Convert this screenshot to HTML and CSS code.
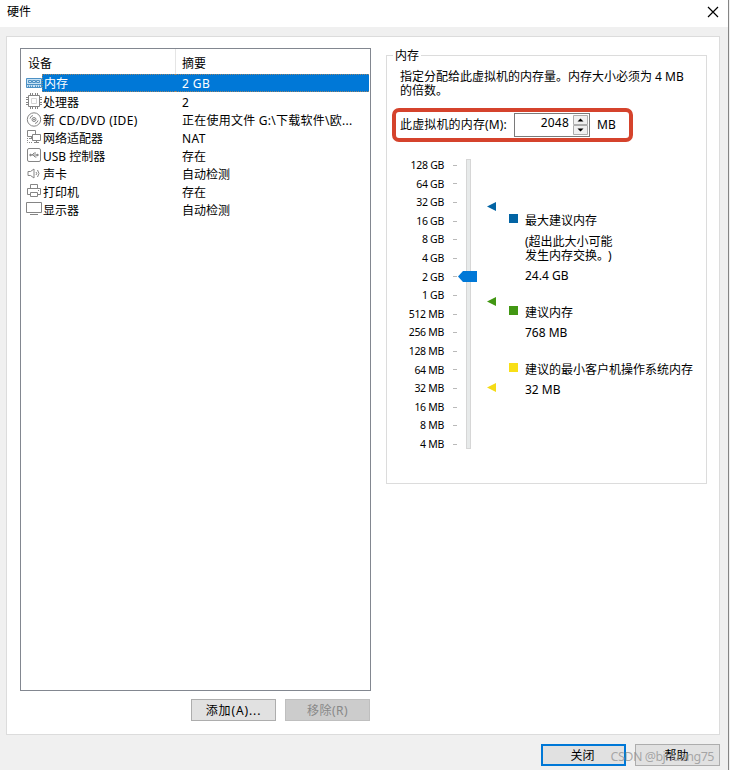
FILE: index.html
```html
<!DOCTYPE html>
<html lang="zh-CN">
<head>
<meta charset="utf-8">
<title>硬件</title>
<link rel="stylesheet" href="styles.css">
</head>
<body>
<div class="window">
  <header class="titlebar">
    <span>硬件</span>
    <svg class="close" width="12" height="12" viewBox="0 0 12 12"><path d="M1 1l10 10M11 1L1 11"/></svg>
  </header>
  <main class="panel">
    <section class="left">
      <div class="list">
        <div class="row head"><span class="dev">设备</span><span class="sum">摘要</span></div>
        <div class="row selected">
          <svg class="icon memory" viewBox="0 0 16 18"><path class="fill" d="M.5 4.500h15v9H.5z"/><path d="M2.500 6.500h3v2h-3zM6.500 6.500h3v2h-3zM10.500 6.500h3v2h-3zM1 10.500h14M2.500 13.500v-2m2 2v-2m2 2v-2m3 2v-2m2 2v-2m2 2v-2"/></svg>
          <span class="dev">内存</span><span class="sum wide">2 GB</span></div>
        <div class="row">
          <svg class="icon" viewBox="0 0 16 18"><path d="M2.500 3.500h11v11h-11z"/><path class="inner" d="M5.500 6.500h5v5h-5z"/><path d="M4.500 1v3m2-3v3m3-3v3m2-3v3m-7 10v3m2-3v3m3-3v3m2-3v3M0 5.500h3m-3 2h3m-3 3h3m-3 2h3m10-7h3m-3 2h3m-3 3h3m-3 2h3"/></svg>
          <span class="dev">处理器</span><span class="sum">2</span></div>
        <div class="row">
          <svg class="icon low" viewBox="0 0 16 18"><circle cx="8" cy="8.500" r="6.700"/><circle cx="8" cy="8.500" r="2"/><circle class="dot" cx="8" cy="8.500" r=".6"/><path d="M4 7.500a4 4 0 0 1 3-3m5 5a4 4 0 0 1-3 3"/></svg>
          <span class="dev tight">新 CD/DVD (IDE)</span><span class="sum latin">正在使用文件 G:\下载软件\欧...</span></div>
        <div class="row">
          <svg class="icon low" viewBox="0 0 16 18"><path d="M1.500 1.500h8v6h-8zM3 9.500h3M5.500 7.500v2"/><path class="mask" d="M6.500 5.500h8v6h-8z"/><path d="M8 13.500h5M10.500 11.500v2"/><path stroke-dasharray="1 1" d="M1.500 9v4.500h5"/></svg>
          <span class="dev">网络适配器</span><span class="sum wide">NAT</span></div>
        <div class="row">
          <svg class="icon low" viewBox="0 0 16 18"><rect x="1.500" y="1.500" width="13" height="13" rx="1.500"/><path d="M4 8h8M6 8l2-2h2M7 8l2 2h1.500"/><circle class="dot" cx="4.500" cy="8" r=".8"/><path class="dot" d="M11 7l1.500 1-1.500 1z"/></svg>
          <span class="dev">USB 控制器</span><span class="sum">存在</span></div>
        <div class="row">
          <svg class="icon low" viewBox="0 0 16 18"><path d="M2 6.500h2.500L8 4v9l-3.500-2.500H2zM10 7q1.500 1.500 0 3M11.500 5q3 3.500 0 7"/></svg>
          <span class="dev">声卡</span><span class="sum">自动检测</span></div>
        <div class="row">
          <svg class="icon low" viewBox="0 0 16 18"><path d="M4.500 6V1.500h7V6M4 11.500H1.500v-6h13v6H12M4.500 9.500h7v4h-7zM12 7.500h1"/></svg>
          <span class="dev">打印机</span><span class="sum">存在</span></div>
        <div class="row">
          <svg class="icon low" viewBox="0 0 16 18"><path d="M.5 1.500h15v10H.5zM4 13.500h8"/></svg>
          <span class="dev">显示器</span><span class="sum">自动检测</span></div>
      </div>
      <div class="actions"><button class="add">添加(A)...</button><button class="disabled" disabled>移除(R)</button></div>
    </section>
    <fieldset class="group">
      <legend>内存</legend>
      <p class="intro">指定分配给此虚拟机的内存量。内存大小必须为 4 MB<br>的倍数。</p>
      <div class="amount">
        <span class="label">此虚拟机的内存(M):</span>
        <div class="spin"><span>2048</span>
          <svg width="15" height="20" viewBox="0 0 15 20"><path class="btn" d="M.5.500h14v9H.5zM.5 10.500h14v9H.5z"/><path d="M4.500 6.500h6l-3-3zM4.500 13.500h6l-3 3z"/></svg>
        </div>
        <span>MB</span>
      </div>
      <div class="chart">
        <div class="scale">
          <span>128 GB</span><span>64 GB</span><span>32 GB</span><span>16 GB</span><span>8 GB</span><span>4 GB</span><span>2 GB</span><span>1 GB</span><span>512 MB</span><span>256 MB</span><span>128 MB</span><span>64 MB</span><span>32 MB</span><span>16 MB</span><span>8 MB</span><span>4 MB</span>
        </div>
        <div class="track"><svg class="thumb" width="19" height="11" viewBox="0 0 19 11"><path d="M0 5.500L5 0h14v11H5z"/></svg></div>
        <svg class="marks" width="10" height="200" viewBox="0 0 10 200"><path class="blue" d="M0 5.500L9 1v9z"/><path class="green" d="M0 100.500L9 96v9z"/><path class="yellow" d="M0 186.500L9 182v9z"/></svg>
        <div class="legend">
          <div class="item max"><i class="blue"></i><div><p>最大建议内存</p><p class="note">(超出此大小可能<br>发生内存交换。<span class="paren">)</span></p><p>24.4 GB</p></div></div>
          <div class="item rec"><i class="green"></i><div><p>建议内存</p><p>768 MB</p></div></div>
          <div class="item min"><i class="yellow"></i><div><p>建议的最小客户机操作系统内存</p><p>32 MB</p></div></div>
        </div>
      </div>
    </fieldset>
  </main>
  <footer class="footer"><button class="default">关闭</button><button class="help">帮助</button><span class="watermark">CSDN @bjhuang75</span></footer>
</div>
</body>
</html>
```
FILE: styles.css
```css
* { box-sizing: border-box; }
body { margin: 0; background: #f0f0f0; color: #000; font: 12px/18px "Noto Sans", "Noto Sans CJK SC", sans-serif; }
p { margin: 0; }
.window { width: 729px; height: 770px; overflow: hidden; border-right: 1px solid #858585; display: flex; flex-direction: column; }
.titlebar { height: 27px; flex: none; background: #fff; padding: 0 9px 4px 7px; display: flex; align-items: center; justify-content: space-between; }
.close { fill: none; stroke: #000; stroke-width: 1.2; }
.panel { margin: 9px 8px 0 6px; height: 699px; flex: none; background: #fff; border: 1px solid #dcdcdc; display: flex; padding: 11px 12px 0 13px; gap: 15px; }
.left { width: 351px; flex: none; }
.list { height: 643px; border: 1px solid #828790; }
.row { display: flex; height: 18px; padding-left: 5px; line-height: 21px; white-space: nowrap; }
.row .dev { width: 133px; padding-left: 1px; }
.row .sum { width: 194px; padding-left: 7px; }
.row .latin { letter-spacing: .25px; }
.row .tight { letter-spacing: .3px; }
.row .wide { letter-spacing: .4px; }
.head { height: 25px; line-height: 29px; padding-left: 0; }
.head .dev { width: 155px; padding-left: 7px; border-right: 1px solid #e5e5e5; }
.head .sum { padding-left: 6px; }
.selected .dev, .selected .sum { background: #0078d7; color: #fff; border: 1px dotted #96846b; border-width: 1px 0; line-height: 18px; }
.selected .dev { border-left-width: 1px; padding-left: 1px; }
.icon { width: 16px; height: 18px; flex: none; fill: none; stroke: #858585; stroke-width: 1; }
.icon.low { margin-top: 1px; }
.icon .dot { fill: #858585; }
.icon .mask { fill: #fff; }
.icon .inner { stroke: #d5d5d5; }
.memory { stroke: #4d91c4; }
.memory .fill { fill: #c9e2f4; }
.actions { display: flex; justify-content: flex-end; gap: 9px; padding: 8px 1px 0 0; }
button { width: 85px; height: 22px; padding: 0; border: 1px solid #adadad; background: #e1e1e1; color: #000; font: inherit; line-height: 22px; }
.add { letter-spacing: .9px; }
button.disabled { background: #ccc; border-color: #bfbfbf; color: #888; letter-spacing: .5px; }
.group { width: 321px; height: 438px; margin: -2px 0 0; padding: 0 0 0 13px; border: 1px solid #dcdcdc; min-width: 0; }
.group legend { margin-left: -7px; padding: 2px 2px 0; line-height: 16px; }
.intro { line-height: 14px; padding-top: 6px; white-space: nowrap; }
.amount { width: 241px; height: 34px; margin: 10px 0 0 -8px; border: 4px solid #d5432c; border-radius: 7px; display: flex; align-items: center; padding-left: 4px; white-space: nowrap; }
.amount .label { width: 114px; line-height: 26px; letter-spacing: .15px; }
.spin { width: 76px; height: 24px; margin-right: 7px; border: 1px solid #7a7a7a; display: flex; justify-content: flex-end; gap: 4px; padding: 1px 1px 0 0; line-height: 16px; letter-spacing: .2px; }
.spin svg { stroke: none; fill: #000; }
.spin .btn { fill: #f0f0f0; stroke: #adadad; }
.chart { display: flex; margin-top: 14px; }
.scale { width: 57px; display: flex; flex-direction: column; font-size: 10.500px; letter-spacing: -.3px; }
.scale span { height: 18.600px; line-height: 18.600px; width: 57px; display: flex; justify-content: flex-end; align-items: center; gap: 9px; }
.scale span::after { content: ""; width: 4px; height: 1px; background: #b9b9b9; }
.track { position: relative; width: 5px; height: 290px; margin: 3px 0 0 9px; background: #e7eaea; border: 1px solid #d6d6d6; }
.thumb { position: absolute; left: -9px; top: 111px; fill: #0078d7; }
.marks { margin: 45px 0 0 16px; flex: none; }
.blue { fill: #0264a4; background: #0264a4; }
.green { fill: #429713; background: #429713; }
.yellow { fill: #f5db16; background: #f8df17; }
.legend { padding: 56px 0 0 12px; white-space: nowrap; }
.item { display: flex; gap: 7px; }
.item i { width: 9px; height: 9px; flex: none; margin-top: 2px; }
.item p + p { margin-top: 2px; }
.item .note { line-height: 14px; }
.item p + .note { margin-top: 5px; }
.paren { padding-left: 5px; }
.max .note + p { margin-top: 4px; }
.rec { margin-top: 19px; }
.min { margin-top: 19px; }
.footer { position: relative; display: flex; gap: 9px; justify-content: flex-end; padding: 9px 8px 0; }
.footer button { line-height: 22px; }
.footer .default { border: 2px solid #0078d7; padding-right: 2px; line-height: 20px; }
.help { padding-right: 2px; }
.watermark { position: absolute; right: 14px; top: 13px; font-size: 12.500px; line-height: 18px; letter-spacing: -.5px; color: rgba(145, 145, 145, .75); white-space: nowrap; }
```
